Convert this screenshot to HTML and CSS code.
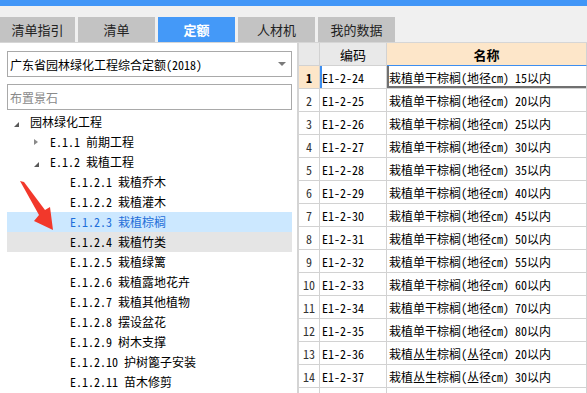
FILE: index.html
```html
<!DOCTYPE html>
<html lang="zh-CN">
<head>
    <meta charset="UTF-8">
    <meta name="viewport" content="width=device-width, initial-scale=1.0">
    <title>定额</title>
    <link rel="stylesheet" href="styles.css">
</head>
<body>
    <div class="topbar"></div>

    <nav class="tabs">
        <div class="tab first">清单指引</div>
        <div class="tab">清单</div>
        <div class="tab active">定额</div>
        <div class="tab">人材机</div>
        <div class="tab">我的数据</div>
    </nav>

    <main class="workspace">
        <aside class="side">
            <div class="select">广东省园林绿化工程综合定额(2018)<span class="caret"></span></div>
            <div class="search">布置景石</div>
            <ul class="tree">
                <li class="node lv0"><i class="tw open"></i>园林绿化工程</li>
                <li class="node lv1"><i class="tw closed"></i><span class="num">E.1.1</span> 前期工程</li>
                <li class="node lv1"><i class="tw open"></i><span class="num">E.1.2</span> 栽植工程</li>
                <li class="node lv2"><span class="num">E.1.2.1</span> 栽植乔木</li>
                <li class="node lv2"><span class="num">E.1.2.2</span> 栽植灌木</li>
                <li class="node lv2 sel"><span class="num">E.1.2.3</span> 栽植棕榈</li>
                <li class="node lv2 hover"><span class="num">E.1.2.4</span> 栽植竹类</li>
                <li class="node lv2"><span class="num">E.1.2.5</span> 栽植绿篱</li>
                <li class="node lv2"><span class="num">E.1.2.6</span> 栽植露地花卉</li>
                <li class="node lv2"><span class="num">E.1.2.7</span> 栽植其他植物</li>
                <li class="node lv2"><span class="num">E.1.2.8</span> 摆设盆花</li>
                <li class="node lv2"><span class="num">E.1.2.9</span> 树木支撑</li>
                <li class="node lv2"><span class="num">E.1.2.10</span> 护树篦子安装</li>
                <li class="node lv2"><span class="num">E.1.2.11</span> 苗木修剪</li>
            </ul>
        </aside>

        <section class="grid">
            <div class="hd"></div>
            <div class="hd">编码</div>
            <div class="hd name">名称</div>

            <div class="rn cur">1</div><div class="code cur"><span class="num">E1-2-24</span></div><div class="nm cur">栽植单干棕榈(地径cm) 15以内</div>
            <div class="rn">2</div><div class="code"><span class="num">E1-2-25</span></div><div class="nm">栽植单干棕榈(地径cm) 20以内</div>
            <div class="rn">3</div><div class="code"><span class="num">E1-2-26</span></div><div class="nm">栽植单干棕榈(地径cm) 25以内</div>
            <div class="rn">4</div><div class="code"><span class="num">E1-2-27</span></div><div class="nm">栽植单干棕榈(地径cm) 30以内</div>
            <div class="rn">5</div><div class="code"><span class="num">E1-2-28</span></div><div class="nm">栽植单干棕榈(地径cm) 35以内</div>
            <div class="rn">6</div><div class="code"><span class="num">E1-2-29</span></div><div class="nm">栽植单干棕榈(地径cm) 40以内</div>
            <div class="rn">7</div><div class="code"><span class="num">E1-2-30</span></div><div class="nm">栽植单干棕榈(地径cm) 45以内</div>
            <div class="rn">8</div><div class="code"><span class="num">E1-2-31</span></div><div class="nm">栽植单干棕榈(地径cm) 50以内</div>
            <div class="rn">9</div><div class="code"><span class="num">E1-2-32</span></div><div class="nm">栽植单干棕榈(地径cm) 55以内</div>
            <div class="rn">10</div><div class="code"><span class="num">E1-2-33</span></div><div class="nm">栽植单干棕榈(地径cm) 60以内</div>
            <div class="rn">11</div><div class="code"><span class="num">E1-2-34</span></div><div class="nm">栽植单干棕榈(地径cm) 70以内</div>
            <div class="rn">12</div><div class="code"><span class="num">E1-2-35</span></div><div class="nm">栽植单干棕榈(地径cm) 80以内</div>
            <div class="rn">13</div><div class="code"><span class="num">E1-2-36</span></div><div class="nm">栽植丛生棕榈(丛径cm) 20以内</div>
            <div class="rn">14</div><div class="code"><span class="num">E1-2-37</span></div><div class="nm">栽植丛生棕榈(丛径cm) 30以内</div>
            <div class="rn"></div><div class="code"></div><div class="nm"></div>
        </section>
    </main>

    <!-- red pointer drawn over the tree -->
    <svg class="arrow" width="60" height="240" viewBox="0 0 60 240">
        <polygon points="20,181 24,182 45,210 50,207 53,230 34,221 39,215" fill="#f2382b"/>
    </svg>
</body>
</html>
```

FILE: styles.css
```css
/* Base */
* {
    box-sizing: border-box;
}

html, body {
    margin: 0;
    height: 100%;
    overflow: hidden;
}

body {
    font-family: "Noto Sans Mono CJK SC", "Noto Sans CJK SC", sans-serif;
    font-size: 12px;
    color: #000;
    background: #f0f0f0;
    position: relative;
}

.num {
    margin-right: 0;
}

/* Top bar + tabs */
.topbar {
    height: 6px;
    background: #4196f7;
}

.tabs {
    height: 36px;
    display: flex;
    align-items: flex-end;
    gap: 3px;
}

.tab {
    width: 77px;
    height: 25px;
    background: #c3c3c3;
    color: #222;
    font-family: "Noto Sans CJK SC", sans-serif;
    font-size: 13px;
    display: flex;
    align-items: center;
    justify-content: center;
}

.tab.first {
    width: 75px;
}

.tab.active {
    background: #4499f8;
    color: #fff;
    font-weight: bold;
}

/* Workspace */
.workspace {
    height: 351px;
    display: flex;
    border-top: 1px solid #d6d6d6;
    background: #fff;
}

.side {
    width: 299px;
    flex: none;
    padding: 8px 5px 0 7px;
    border-right: 2px solid #d4d4d4;
    background: #fff;
}

.select,
.search {
    height: 26px;
    border: 1px solid #a9a9a9;
    padding-left: 2px;
    display: flex;
    align-items: center;
    white-space: nowrap;
}

.select {
    position: relative;
}

.caret {
    position: absolute;
    right: 5px;
    top: 10px;
    width: 0;
    height: 0;
    border-left: 4px solid transparent;
    border-right: 4px solid transparent;
    border-top: 4px solid #7a7a7a;
}

.search {
    margin-top: 7px;
    color: #8a8a8a;
}

/* Tree */
.tree {
    list-style: none;
    margin: 2px 0 0;
    padding: 0;
}

.node {
    position: relative;
    height: 20px;
    line-height: 20px;
    padding-left: 23px;
    white-space: pre;
}

.node.lv1 {
    padding-left: 43px;
}

.node.lv2 {
    padding-left: 63px;
}

.node.sel {
    background: #cce8ff;
    color: #1f6fd9;
}

.node.hover {
    background: #e5e5e5;
}

.tw {
    position: absolute;
    width: 0;
    height: 0;
}

.tw.open {
    top: 10px;
    border-left: 5px solid transparent;
    border-bottom: 5px solid #595959;
}

.tw.closed {
    top: 7px;
    border-top: 3.5px solid transparent;
    border-bottom: 3.5px solid transparent;
    border-left: 4px solid #8a8a8a;
}

.lv0 .tw {
    left: 7px;
}

.lv1 .tw {
    left: 27px;
}

/* Grid */
.grid {
    flex: 1;
    display: grid;
    grid-template-columns: 21px 67px 1fr;
    grid-auto-rows: 23px;
    align-content: start;
    background: #fff;
}

.grid > div {
    border-right: 1px solid #d2d2d2;
    border-bottom: 1px solid #d2d2d2;
    display: flex;
    align-items: center;
    white-space: pre;
    overflow: hidden;
}

.hd {
    background: #e9e9e9;
    justify-content: center;
    font-family: "Noto Sans CJK SC", sans-serif;
    font-size: 13px;
}

.grid > .hd.name {
    background: #fde6c9;
    font-weight: bold;
    border-bottom-color: #3d8ef0;
}

.rn {
    justify-content: center;
    color: #333;
}

.rn.cur {
    background: #fde6c9;
    color: #000;
    font-weight: bold;
}

.code {
    padding-left: 2px;
}

.code.cur {
    box-shadow: inset 2px 0 #3d8ef0;
}

.nm {
    padding-left: 2px;
}

.nm.cur {
    box-shadow: inset 2px 0 #707070, inset 0 -2px #707070;
}

/* Pointer overlay */
.arrow {
    position: absolute;
    left: 0;
    top: 0;
}
```
